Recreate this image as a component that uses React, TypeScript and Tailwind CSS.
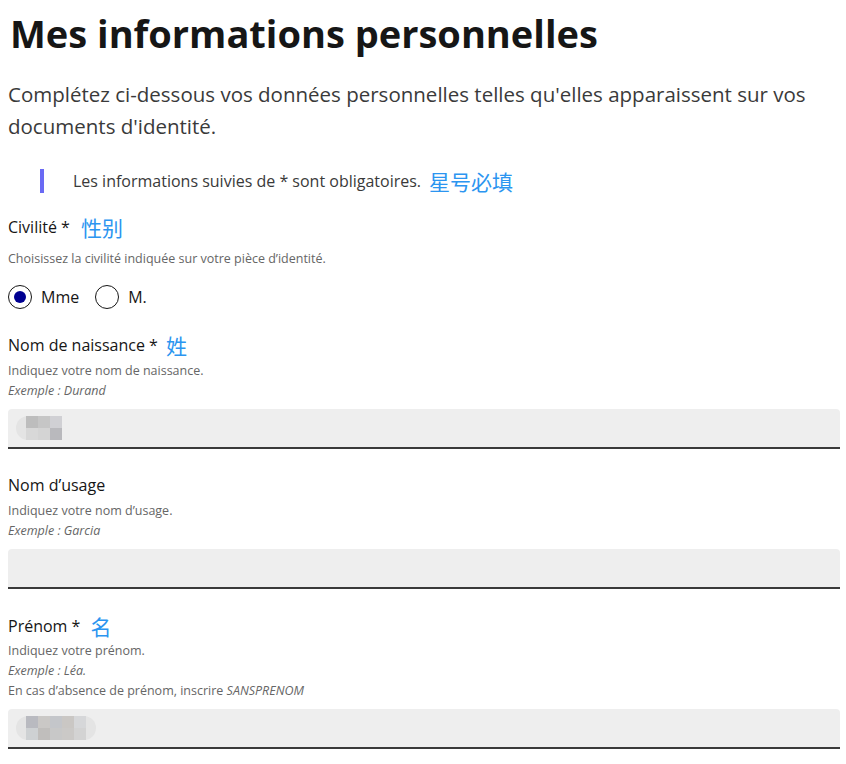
import React from 'react';

const blocksA = [
  ['#bdbdbd', '#c6c6c6', '#d0d0d4'],
  ['#d8d8d8', '#d4d4d4', '#b9b9bd'],
];

const blocksB = [
  ['#b9bac0', '#cac8c6', '#c4c6ca', '#cac7c4', '#d6d7d9'],
  ['#ced1d3', '#c0bebc', '#c8c8c8', '#cbc9c7', '#d3d3d3'],
];

function Blur({ rows, pill }: { rows: string[][]; pill: string }) {
  return (
    <div className={`flex items-center rounded-full bg-[#e4e4e4] pl-[10px] ${pill}`}>
      <div className="flex flex-col">
        {rows.map((row, i) => (
          <div key={i} className="flex">
            {row.map((c, j) => (
              <div key={j} className="w-3 h-3" style={{ backgroundColor: c }} />
            ))}
          </div>
        ))}
      </div>
    </div>
  );
}

function Input({ children }: { children?: React.ReactNode }) {
  return (
    <div className="h-[40px] bg-[#eeeeee] rounded-t-[4px] border-b-2 border-[#3a3a3a] flex items-center pl-[8px]">
      {children}
    </div>
  );
}

function Zh({ children, className = '' }: { children: React.ReactNode; className?: string }) {
  return (
    <span
      className={`text-[21px] leading-[24px] text-[#2b95f0] ${className}`}
      style={{ fontFamily: '"Noto Sans CJK SC", sans-serif' }}
    >
      {children}
    </span>
  );
}

const hint = 'text-[12.5px] leading-[20px] text-[#666666]';

export default function App() {
  return (
    <div
      className="bg-white text-[#161616] pl-2 pr-[6px] pb-4"
      style={{ fontFamily: '"Open Sans", "Noto Sans CJK SC", sans-serif' }}
    >
      <h1 className="text-[38px] font-bold leading-[48px] pt-[9px] pl-[2px]">
        Mes informations personnelles
      </h1>

      <p className="mt-[21px] text-[20.5px] leading-[32px] text-[#3a3a3a]">
        Complétez ci-dessous vos données personnelles telles qu'elles apparaissent sur vos documents d'identité.
      </p>

      {/* callout */}
      <div className="mt-[27px] ml-[32px] flex items-center h-[24px]">
        <div className="w-1 h-[24px] bg-[#6a6af4]" />
        <span className="ml-[29px] text-[16px] leading-[24px] text-[#3a3a3a]">
          Les informations suivies de * sont obligatoires.
        </span>
        <Zh className="ml-[8px]">星号必填</Zh>
      </div>

      {/* Civilité */}
      <div className="mt-[19px] flex items-center h-[30px]">
        <span className="text-[16px]">Civilité *</span>
        <Zh className="ml-[11px]">性别</Zh>
      </div>
      <p className={`mt-[7px] ${hint}`}>
        Choisissez la civilité indiquée sur votre pièce d’identité.
      </p>
      <div className="mt-[16px] flex items-center gap-[16px]">
        <label className="flex items-center gap-[9px]">
          <span className="w-6 h-6 rounded-full border border-[#161616] flex items-center justify-center">
            <span className="w-[12px] h-[12px] rounded-full bg-[#000091]" />
          </span>
          <span className="text-[16px]">Mme</span>
        </label>
        <label className="flex items-center gap-[9px]">
          <span className="w-6 h-6 rounded-full border border-[#161616]" />
          <span className="text-[16px]">M.</span>
        </label>
      </div>

      {/* Nom de naissance */}
      <div className="mt-[23px] flex items-center h-[26px]">
        <span className="text-[16px]">Nom de naissance *</span>
        <Zh className="ml-[8px]">姓</Zh>
      </div>
      <p className={`mt-[3px] ${hint}`}>Indiquez votre nom de naissance.</p>
      <p className={`${hint} italic`}>Exemple : Durand</p>
      <div className="mt-[8px]">
        <Input>
          <Blur rows={blocksA} pill="" />
        </Input>
      </div>

      {/* Nom d'usage */}
      <div className="mt-[23px] flex items-center h-[26px]">
        <span className="text-[16px]">Nom d’usage</span>
      </div>
      <p className={`mt-[3px] ${hint}`}>Indiquez votre nom d’usage.</p>
      <p className={`${hint} italic`}>Exemple : Garcia</p>
      <div className="mt-[8px]">
        <Input />
      </div>

      {/* Prénom */}
      <div className="mt-[24px] flex items-center h-[26px]">
        <span className="text-[16px]">Prénom *</span>
        <Zh className="ml-[10px]">名</Zh>
      </div>
      <p className={`mt-[2px] ${hint}`}>Indiquez votre prénom.</p>
      <p className={`${hint} italic`}>Exemple : Léa.</p>
      <p className={hint}>
        En cas d’absence de prénom, inscrire <span className="italic">SANSPRENOM</span>
      </p>
      <div className="mt-[8px]">
        <Input>
          <Blur rows={blocksB} pill="pr-[10px]" />
        </Input>
      </div>
    </div>
  );
}
